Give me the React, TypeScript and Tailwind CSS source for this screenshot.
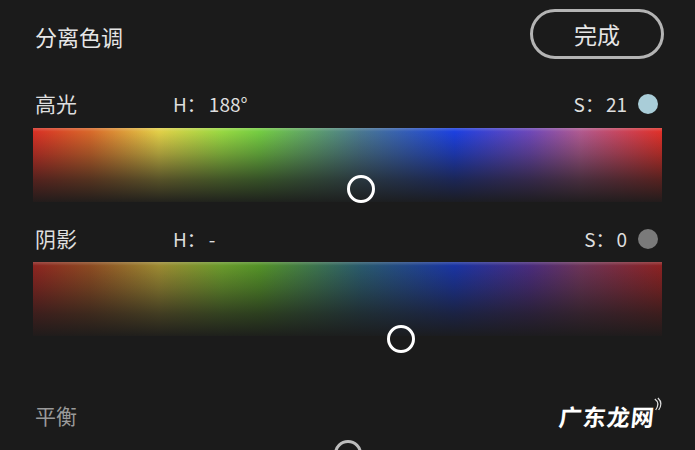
const hueBright =
  "bg-[linear-gradient(to_right,#d83025_0%,#d8682a_9%,#e2cf48_20%,#98d842_30%,#74cc42_36%,#4a7890_52%,#1c40e0_67%,#6e48b8_79%,#b05a90_87%,#e03028_100%)]";
const hueDim =
  "bg-[linear-gradient(to_right,#8c2420_0%,#8c4a22_9%,#9c8a32_20%,#6a9a2c_30%,#549228_36%,#2a5a6c_52%,#1a34a2_67%,#4a2c7c_79%,#6c3458_87%,#8c2222_100%)]";

function Handle({ x, y, tone = "border-white" }: { x: number; y: number; tone?: string }) {
  return (
    <div
      className={`absolute h-[28px] w-[28px] -translate-x-1/2 -translate-y-1/2 rounded-full border-[3px] ${tone}`}
      style={{ left: x, top: y }}
    />
  );
}

function Row({ label, hue, sat, dot }: { label: string; hue: string; sat: string; dot: string }) {
  return (
    <div className="flex h-[24px] items-center text-[#dedede]">
      <span className="w-[138px] text-[21px]">{label}</span>
      <span className="flex-1 text-[19px]">
        H：<span className="ml-[3px]">{hue}</span>
      </span>
      <span className="text-[19px]">
        S：<span className="ml-[2px]">{sat}</span>
      </span>
      <span className={`ml-[11px] mr-[4px] h-[20px] w-[20px] rounded-full ${dot}`} />
    </div>
  );
}

function Spectrum({ hueClass, handleX, handleY }: { hueClass: string; handleX: number; handleY: number }) {
  return (
    <div className={`relative h-[74px] ${hueClass}`}>
      <div className="absolute inset-0 bg-[linear-gradient(to_bottom,rgba(255,255,255,0.18)_0%,rgba(255,255,255,0)_5%,rgba(27,27,27,0.3)_35%,rgba(27,27,27,0.7)_70%,rgba(27,27,27,0.96)_100%)]" />
      <Handle x={handleX} y={handleY} />
    </div>
  );
}

export default function App() {
  return (
    <div className="h-[450px] w-[695px] overflow-hidden bg-[#1b1b1b] px-[33px] pt-[9px] font-['Noto_Sans_CJK_SC','Noto_Sans',sans-serif]">
      {/* header */}
      <div className="flex h-[50px] items-center justify-between">
        <span className="mt-[5px] pl-[2px] text-[22px] text-[#e6e6e6]">分离色调</span>
        <button className="mr-[-2px] flex h-[50px] w-[134px] items-center justify-center rounded-full border-[3px] border-[#b4b4b4] text-[23px] text-[#e6e6e6]">
          完成
        </button>
      </div>

      <div className="mt-[33px] pl-[2px]">
        <Row label="高光" hue="188°" sat="21" dot="bg-[#a9cdd8]" />
      </div>
      <div className="mt-[12px]">
        <Spectrum hueClass={hueBright} handleX={328} handleY={61} />
      </div>

      <div className="mt-[25px] pl-[2px]">
        <Row label="阴影" hue="-" sat="0" dot="bg-[#7a7a7a]" />
      </div>
      <div className="mt-[11px]">
        <Spectrum hueClass={hueDim} handleX={368} handleY={77} />
      </div>

      <div className="mt-[68px] flex h-[24px] items-center justify-between pl-[2px]">
        <span className="text-[21px] text-[#9a9a9a]">平衡</span>
        <span className="relative mr-[7px] -skew-x-6 text-[23px] font-bold tracking-[1px] text-white">
          广东龙网
          <svg className="absolute right-[-6px] top-[-2px]" width="10" height="14" viewBox="0 0 10 14" fill="none">
            <path d="M2 2 Q8 6 4 13" stroke="#ddd" strokeWidth="1.2" />
            <path d="M5 1 Q11 6 7 13" stroke="#ddd" strokeWidth="1.2" />
          </svg>
        </span>
      </div>
      <div className="relative mt-[12px] h-[20px]">
        <Handle x={315} y={14} tone="border-[#bdbdbd]" />
      </div>
    </div>
  );
}
